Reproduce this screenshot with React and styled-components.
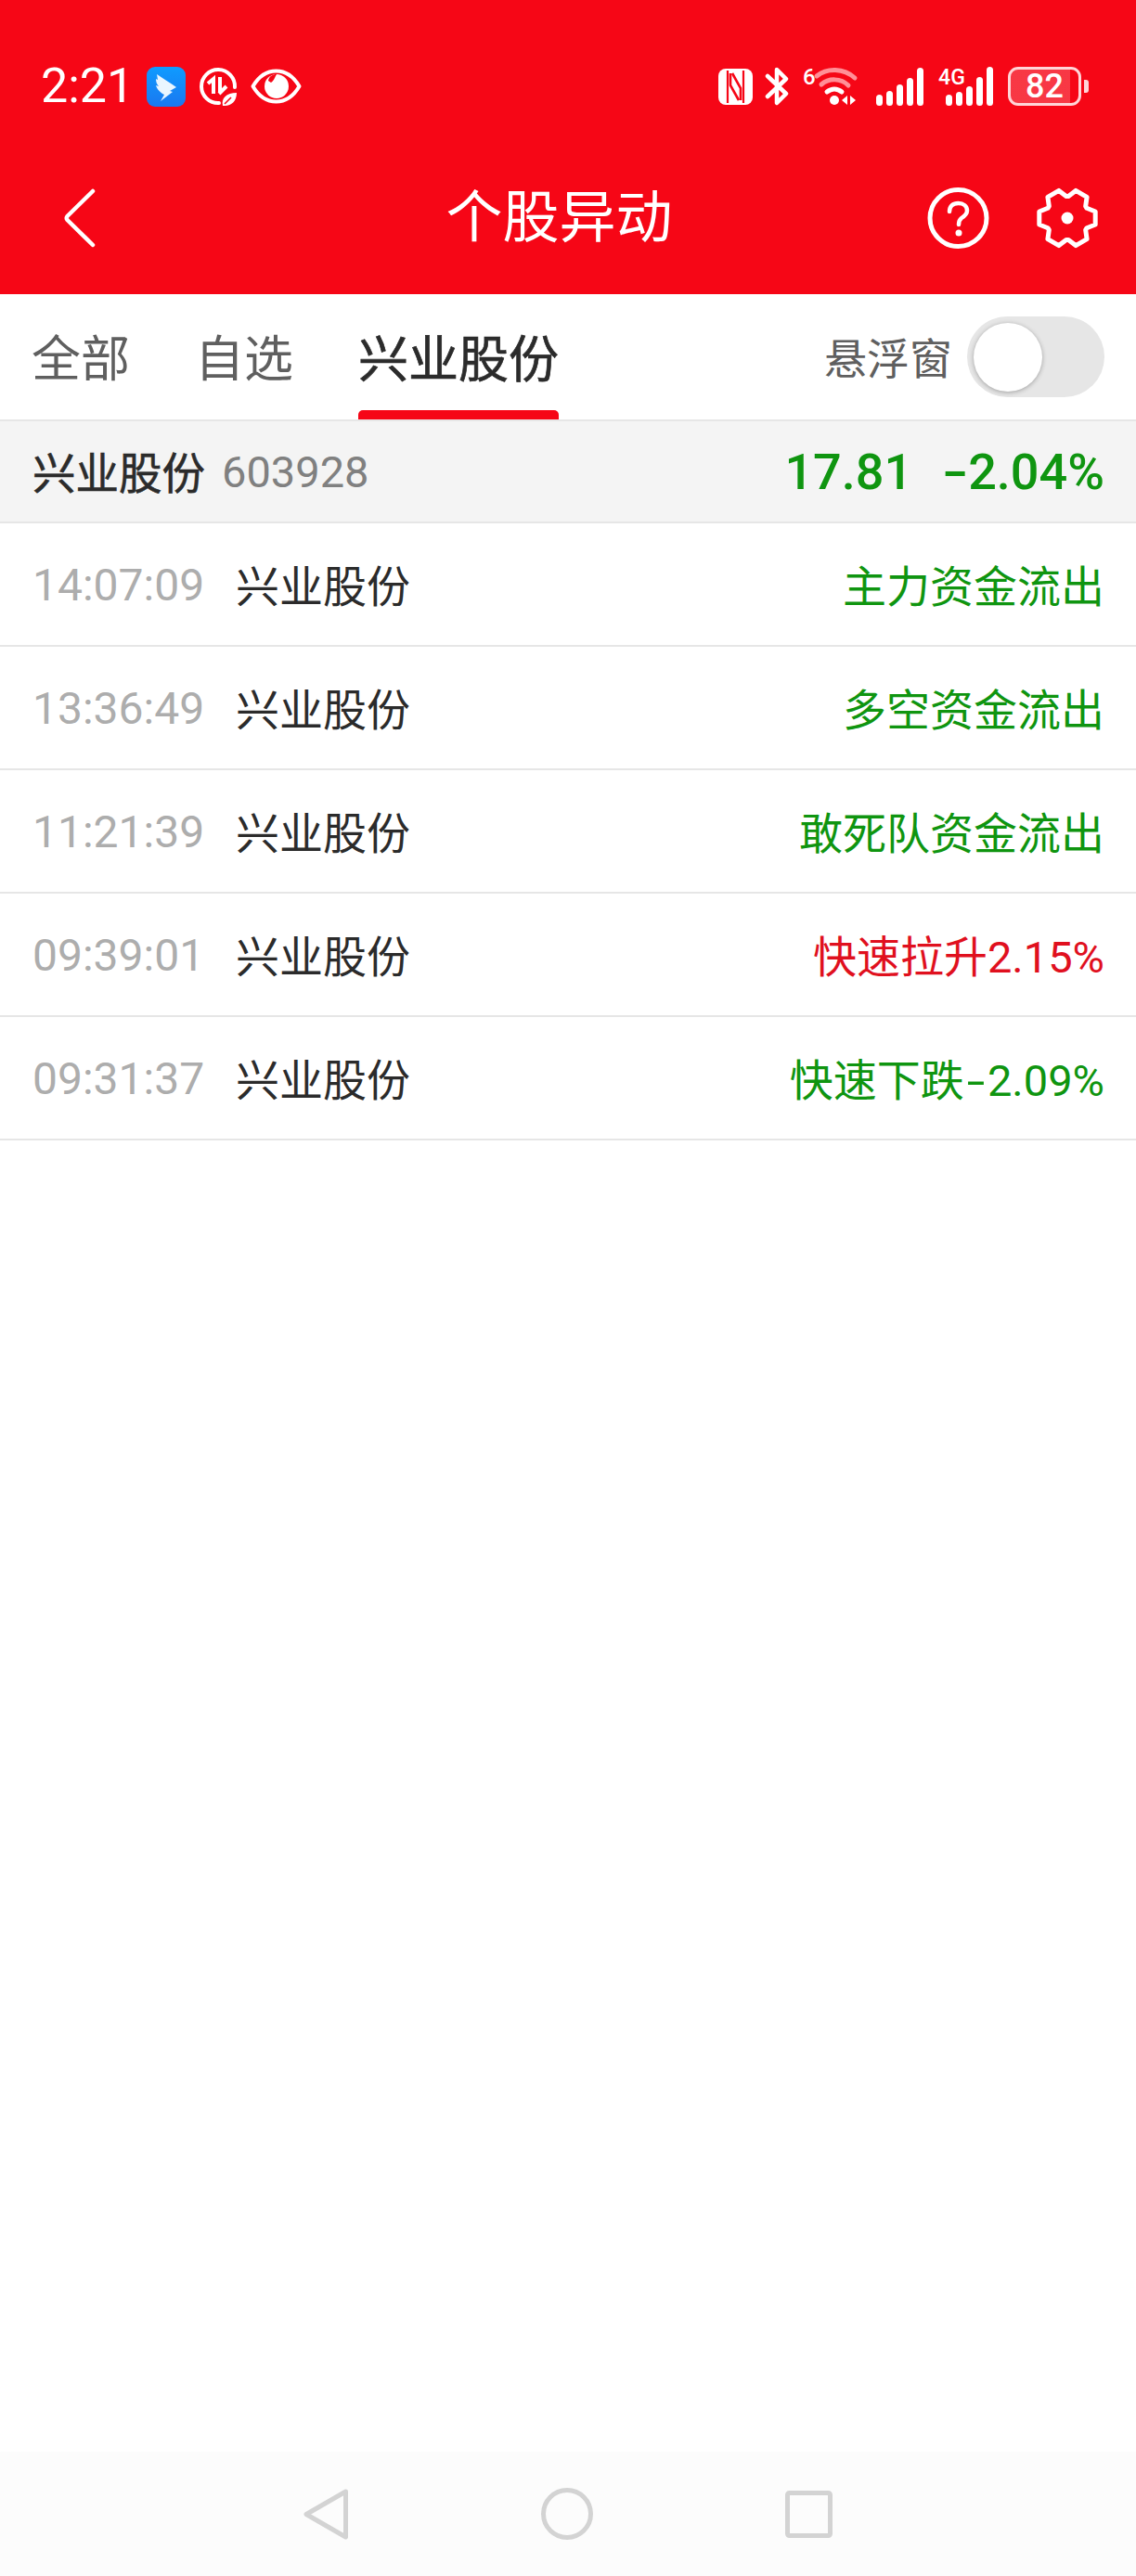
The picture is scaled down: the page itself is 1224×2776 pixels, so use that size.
import React from 'react';
import styled, { createGlobalStyle } from 'styled-components';

const GlobalStyle = createGlobalStyle`
  html, body {
    margin: 0;
    padding: 0;
    background: #fff;
  }
  * {
    box-sizing: border-box;
  }
`;

const FONT = `Roboto, "Noto Sans CJK SC", sans-serif`;
const RED = '#f60616';
const GREEN = '#0f9510';

const Page = styled.div`
  display: flex;
  flex-direction: column;
  min-height: 100vh;
  font-family: ${FONT};
  background: #fff;
`;

const Header = styled.header`
  background: ${RED};
  color: #fff;
`;

const StatusBar = styled.div`
  display: flex;
  justify-content: space-between;
  align-items: center;
  height: 153px;
  padding: 33px 51px 0 44px;
`;

const StatusGroup = styled.div`
  display: flex;
  align-items: center;
  gap: 14px;
`;

const StatusRight = styled.div`
  display: flex;
  align-items: center;
  gap: 13px;
`;

const Clock = styled.span`
  font-size: 52px;
  line-height: 1;
`;

const BatteryWrap = styled.div`
  display: flex;
  align-items: center;
  gap: 3px;
`;

const BatteryBody = styled.div`
  display: flex;
  justify-content: center;
  align-items: center;
  width: 79px;
  height: 42px;
  border: 3px solid #ffd5d8;
  border-radius: 11px;
  background: linear-gradient(90deg, rgba(255, 255, 255, 0.2) 87%, transparent 87%);
  font-size: 36px;
  font-weight: 500;
  line-height: 1;
`;

const BatteryNub = styled.div`
  width: 5px;
  height: 14px;
  border-radius: 0 3px 3px 0;
  background: #ffd5d8;
`;

const NavBar = styled.div`
  display: flex;
  align-items: center;
  height: 164px;
  padding: 0 40px 0 68px;
`;

const Title = styled.h1`
  flex: 1;
  margin: 0 0 0 102px;
  font-size: 61px;
  font-weight: 400;
  line-height: 1;
  text-align: center;
`;

const NavActions = styled.div`
  display: flex;
  align-items: center;
  gap: 50px;
`;

const Tabs = styled.nav`
  display: flex;
  align-items: center;
  gap: 70px;
  height: 135px;
  padding: 0 34px;
`;

const Tab = styled.div`
  position: relative;
  display: flex;
  align-items: center;
  height: 100%;
  padding-bottom: 3px;
  font-size: ${p => (p.$active ? '54px' : '53px')};
  color: ${p => (p.$active ? '#2b2b2b' : '#5f5f5f')};

  ${p => p.$active && `
    -webkit-text-stroke: 0.7px #2b2b2b;

    &::after {
      content: '';
      position: absolute;
      left: 0;
      right: 0;
      bottom: 0;
      height: 10px;
      border-radius: 5px 5px 0 0;
      background: ${RED};
    }
  `}
`;

const FloatToggle = styled.div`
  display: flex;
  align-items: center;
  gap: 16px;
  margin-left: auto;
  font-size: 46px;
  color: #5f5f5f;
`;

const ToggleLabel = styled.span`
  padding-bottom: 4px;
`;

const ToggleTrack = styled.div`
  display: flex;
  align-items: center;
  width: 148px;
  height: 87px;
  padding-left: 7px;
  border-radius: 44px;
  background: #e6e6e6;
`;

const ToggleKnob = styled.div`
  width: 74px;
  height: 74px;
  border-radius: 50%;
  background: #fff;
  box-shadow: 0 1px 5px rgba(0, 0, 0, 0.3);
`;

const StockRow = styled.div`
  display: flex;
  align-items: center;
  height: 112px;
  padding: 0 34px 0 35px;
  background: #f4f4f4;
  border-top: 2px solid #e6e6e6;
  border-bottom: 2px solid #e6e6e6;
`;

const StockName = styled.span`
  padding-bottom: 3px;
  font-size: 46.5px;
  color: #2b2b2b;
  -webkit-text-stroke: 0.6px #2b2b2b;
`;

const StockCode = styled.span`
  margin-left: 18px;
  font-size: 47px;
  color: #808080;
`;

const Quote = styled.div`
  display: flex;
  gap: 33px;
  margin-left: auto;
  font-size: 54px;
  font-weight: 500;
  color: ${GREEN};
`;

const Dash = styled.span`
  display: inline-block;
  margin: 0 ${p => (p.$tight ? '0.08em' : '0.13em')};
  transform: scaleX(1.5);
`;

const List = styled.div`
  display: flex;
  flex-direction: column;
`;

const Row = styled.div`
  display: flex;
  align-items: center;
  height: 133px;
  padding: 0 34px 0 35px;
  border-bottom: 2px solid #e6e6e6;
`;

const RowTime = styled.span`
  width: 219px;
  padding-top: 2px;
  font-size: 48px;
  color: #adadad;
`;

const RowName = styled.span`
  padding-bottom: 3px;
  font-size: 47px;
  color: #2b2b2b;
`;

const RowEvent = styled.span`
  margin-left: auto;
  padding-bottom: 3px;
  font-size: 47px;
  color: ${p => (p.$up ? '#e0101e' : GREEN)};
`;

const Spacer = styled.div`
  flex: 1;
`;

const SystemNav = styled.div`
  display: flex;
  justify-content: center;
  align-items: center;
  gap: 207px;
  height: 134px;
  background: #fcfcfc;
`;

const gearPath = () => {
  const pts = [];
  const at = (deg, r) => {
    const a = (deg * Math.PI) / 180;
    return `${(34 + r * Math.cos(a)).toFixed(1)} ${(34 + r * Math.sin(a)).toFixed(1)}`;
  };
  for (let i = 0; i < 6; i++) {
    const a = i * 60;
    pts.push(at(a - 27, 23.5), at(a - 13, 31), at(a + 13, 31), at(a + 27, 23.5));
  }
  return `M${pts.join('L')}Z`;
};

const AppIcon = () => (
  <svg width="42" height="43" viewBox="0 0 42 43">
    <defs>
      <linearGradient id="appBlue" x1="0" y1="0" x2="0" y2="1">
        <stop offset="0" stopColor="#0f9bff" />
        <stop offset="1" stopColor="#1a78f0" />
      </linearGradient>
    </defs>
    <rect width="42" height="43" rx="9" fill="url(#appBlue)" />
    <path
      d="M11 8C17 12 25 17 32 22L25 26L28 27L15 37L19 30C15 28 11 24 10 20L13 21C11 19 10 16 10 13L12 14Z"
      fill="#eaf6ff"
    />
  </svg>
);

const DataSaverIcon = () => (
  <svg width="42" height="43" viewBox="0 0 42 43">
    <path
      d="M22 39A18 18 0 1 1 39 22"
      fill="none"
      stroke="#fff"
      strokeWidth="4"
      strokeLinecap="round"
    />
    <path d="M10 18L16 13V29" fill="none" stroke="#fff" strokeWidth="4" />
    <path d="M23 11V28M22 29L30 21" fill="none" stroke="#fff" strokeWidth="4" />
    <path d="M26 42C24 34 30 28 41 28C41 37 35 43 26 42Z" fill="#fff" />
    <path d="M28 40L35 33" stroke={RED} strokeWidth="1.6" />
  </svg>
);

const EyeIcon = () => (
  <svg width="55" height="38" viewBox="0 0 55 38">
    <path
      d="M2.5 19C9 8 18 2.5 27.5 2.5S46 8 52.5 19C46 30 37 35.5 27.5 35.5S9 30 2.5 19Z"
      fill="none"
      stroke="#fff"
      strokeWidth="4"
      strokeLinejoin="round"
    />
    <circle cx="28" cy="19" r="13" fill="#fff" />
    <path d="M19 13C20 8 24 6 28 6C26 9 26 12 22 15Z" fill={RED} />
  </svg>
);

const NfcIcon = () => (
  <svg width="37" height="39" viewBox="0 0 37 39">
    <rect width="37" height="39" rx="8" fill="#fff" />
    <path d="M10 2V37M27 2V37" stroke={RED} strokeWidth="2.2" />
    <path d="M15 5L24 21V34" fill="none" stroke={RED} strokeWidth="2.6" />
    <path d="M22 34L13 18V5" fill="none" stroke={RED} strokeWidth="2.6" />
  </svg>
);

const BluetoothIcon = () => (
  <svg width="28" height="42" viewBox="0 0 28 42">
    <path
      d="M3 10L23 29L13 39V3L23 13L3 32"
      fill="none"
      stroke="#fff"
      strokeWidth="4.5"
      strokeLinejoin="round"
      strokeLinecap="round"
    />
  </svg>
);

const WifiIcon = () => (
  <svg width="66" height="54" viewBox="0 -6 66 54">
    <text x="0" y="19" fontFamily={FONT} fontSize="24" fontWeight="500" fill="#fff">6</text>
    <path d="M15 10C26 1 44 1 56 12" fill="none" stroke="#ff8f97" strokeWidth="5" strokeLinecap="round" />
    <path d="M20 19C28 12 41 12 49 20" fill="none" stroke="#ff8f97" strokeWidth="5" strokeLinecap="round" />
    <path d="M26 27C31 23 37 23 42 27" fill="none" stroke="#fff" strokeWidth="5" strokeLinecap="round" />
    <circle cx="34" cy="36" r="5" fill="#fff" />
    <path d="M48 31V41L42 36Z" fill="#fff" />
    <path d="M51 31V41L57 36Z" fill="#fff" />
  </svg>
);

const SignalIcon = () => (
  <svg width="51" height="42" viewBox="0 0 51 42">
    <rect x="0" y="30" width="7" height="12" rx="3.5" fill="#fff" />
    <rect x="11" y="26" width="7" height="16" rx="3.5" fill="#fff" />
    <rect x="22" y="19" width="7" height="23" rx="3.5" fill="#fff" />
    <rect x="33" y="12" width="7" height="30" rx="3.5" fill="#fff" />
    <rect x="44" y="1" width="7" height="41" rx="3.5" fill="#fff" />
  </svg>
);

const Signal4gIcon = () => (
  <svg width="65" height="54" viewBox="0 -6 65 54">
    <text x="3" y="19" fontFamily={FONT} fontSize="23" fontWeight="500" fill="#fff" textLength="29">4G</text>
    <rect x="11" y="30" width="7" height="12" rx="3.5" fill="#fff" />
    <rect x="22" y="27" width="7" height="15" rx="3.5" fill="#fff" />
    <rect x="33" y="21" width="7" height="21" rx="3.5" fill="#fff" />
    <rect x="44" y="11" width="7" height="31" rx="3.5" fill="#fff" />
    <rect x="55" y="0" width="7" height="42" rx="3.5" fill="#fff" />
  </svg>
);

const BackIcon = () => (
  <svg width="36" height="64" viewBox="0 0 36 64">
    <path
      d="M32 3L4.5 30Q3 32 4.5 34L32 61"
      fill="none"
      stroke="#fff"
      strokeWidth="4.5"
      strokeLinecap="round"
      strokeLinejoin="round"
    />
  </svg>
);

const HelpIcon = () => (
  <svg width="67" height="68" viewBox="0 0 67 68">
    <circle cx="33.5" cy="34" r="30.5" fill="none" stroke="#fff" strokeWidth="5" />
    <path
      d="M24 27C24 21 28 18 33.5 18C39 18 43 21 43 26C43 30 40 32 37 34C35 35.5 34 37 34 41"
      fill="none"
      stroke="#fff"
      strokeWidth="4.5"
      strokeLinecap="round"
    />
    <circle cx="34" cy="50" r="3.5" fill="#fff" />
  </svg>
);

const GearIcon = () => (
  <svg width="68" height="68" viewBox="0 0 68 68">
    <path d={gearPath()} fill="none" stroke="#fff" strokeWidth="5" strokeLinejoin="round" />
    <circle cx="34" cy="34" r="6.5" fill="#fff" />
  </svg>
);

const NavBackIcon = () => (
  <svg width="49" height="55" viewBox="0 0 49 55">
    <path
      d="M45.5 3L3 27.5L45.5 52Z"
      fill="none"
      stroke="#d3d3d3"
      strokeWidth="5"
      strokeLinejoin="round"
    />
  </svg>
);

const NavHomeIcon = () => (
  <svg width="56" height="56" viewBox="0 0 56 56">
    <circle cx="28" cy="28" r="25.5" fill="none" stroke="#d3d3d3" strokeWidth="5" />
  </svg>
);

const NavRecentIcon = () => (
  <svg width="51" height="51" viewBox="0 0 51 51">
    <rect x="2.5" y="2.5" width="46" height="46" rx="2" fill="none" stroke="#d3d3d3" strokeWidth="5" />
  </svg>
);

const events = [
  { time: '14:07:09', text: '主力资金流出' },
  { time: '13:36:49', text: '多空资金流出' },
  { time: '11:21:39', text: '敢死队资金流出' },
  { time: '09:39:01', text: '快速拉升2.15%', up: true },
  { time: '09:31:37', text: <>快速下跌<Dash>-</Dash>2.09%</> },
];

const App = () => (
  <Page>
    <GlobalStyle />
    <Header>
      <StatusBar>
        <StatusGroup>
          <Clock>2:21</Clock>
          <AppIcon />
          <DataSaverIcon />
          <EyeIcon />
        </StatusGroup>
        <StatusRight>
          <NfcIcon />
          <BluetoothIcon />
          <WifiIcon />
          <SignalIcon />
          <Signal4gIcon />
          <BatteryWrap>
            <BatteryBody>82</BatteryBody>
            <BatteryNub />
          </BatteryWrap>
        </StatusRight>
      </StatusBar>
      <NavBar>
        <BackIcon />
        <Title>个股异动</Title>
        <NavActions>
          <HelpIcon />
          <GearIcon />
        </NavActions>
      </NavBar>
    </Header>
    <Tabs>
      <Tab>全部</Tab>
      <Tab>自选</Tab>
      <Tab $active>兴业股份</Tab>
      <FloatToggle>
        <ToggleLabel>悬浮窗</ToggleLabel>
        <ToggleTrack>
          <ToggleKnob />
        </ToggleTrack>
      </FloatToggle>
    </Tabs>
    <StockRow>
      <StockName>兴业股份</StockName>
      <StockCode>603928</StockCode>
      <Quote>
        <span>17.81</span>
        <span><Dash $tight>-</Dash>2.04%</span>
      </Quote>
    </StockRow>
    <List>
      {events.map(e => (
        <Row key={e.time}>
          <RowTime>{e.time}</RowTime>
          <RowName>兴业股份</RowName>
          <RowEvent $up={e.up}>{e.text}</RowEvent>
        </Row>
      ))}
    </List>
    <Spacer />
    <SystemNav>
      <NavBackIcon />
      <NavHomeIcon />
      <NavRecentIcon />
    </SystemNav>
  </Page>
);

export default App;
